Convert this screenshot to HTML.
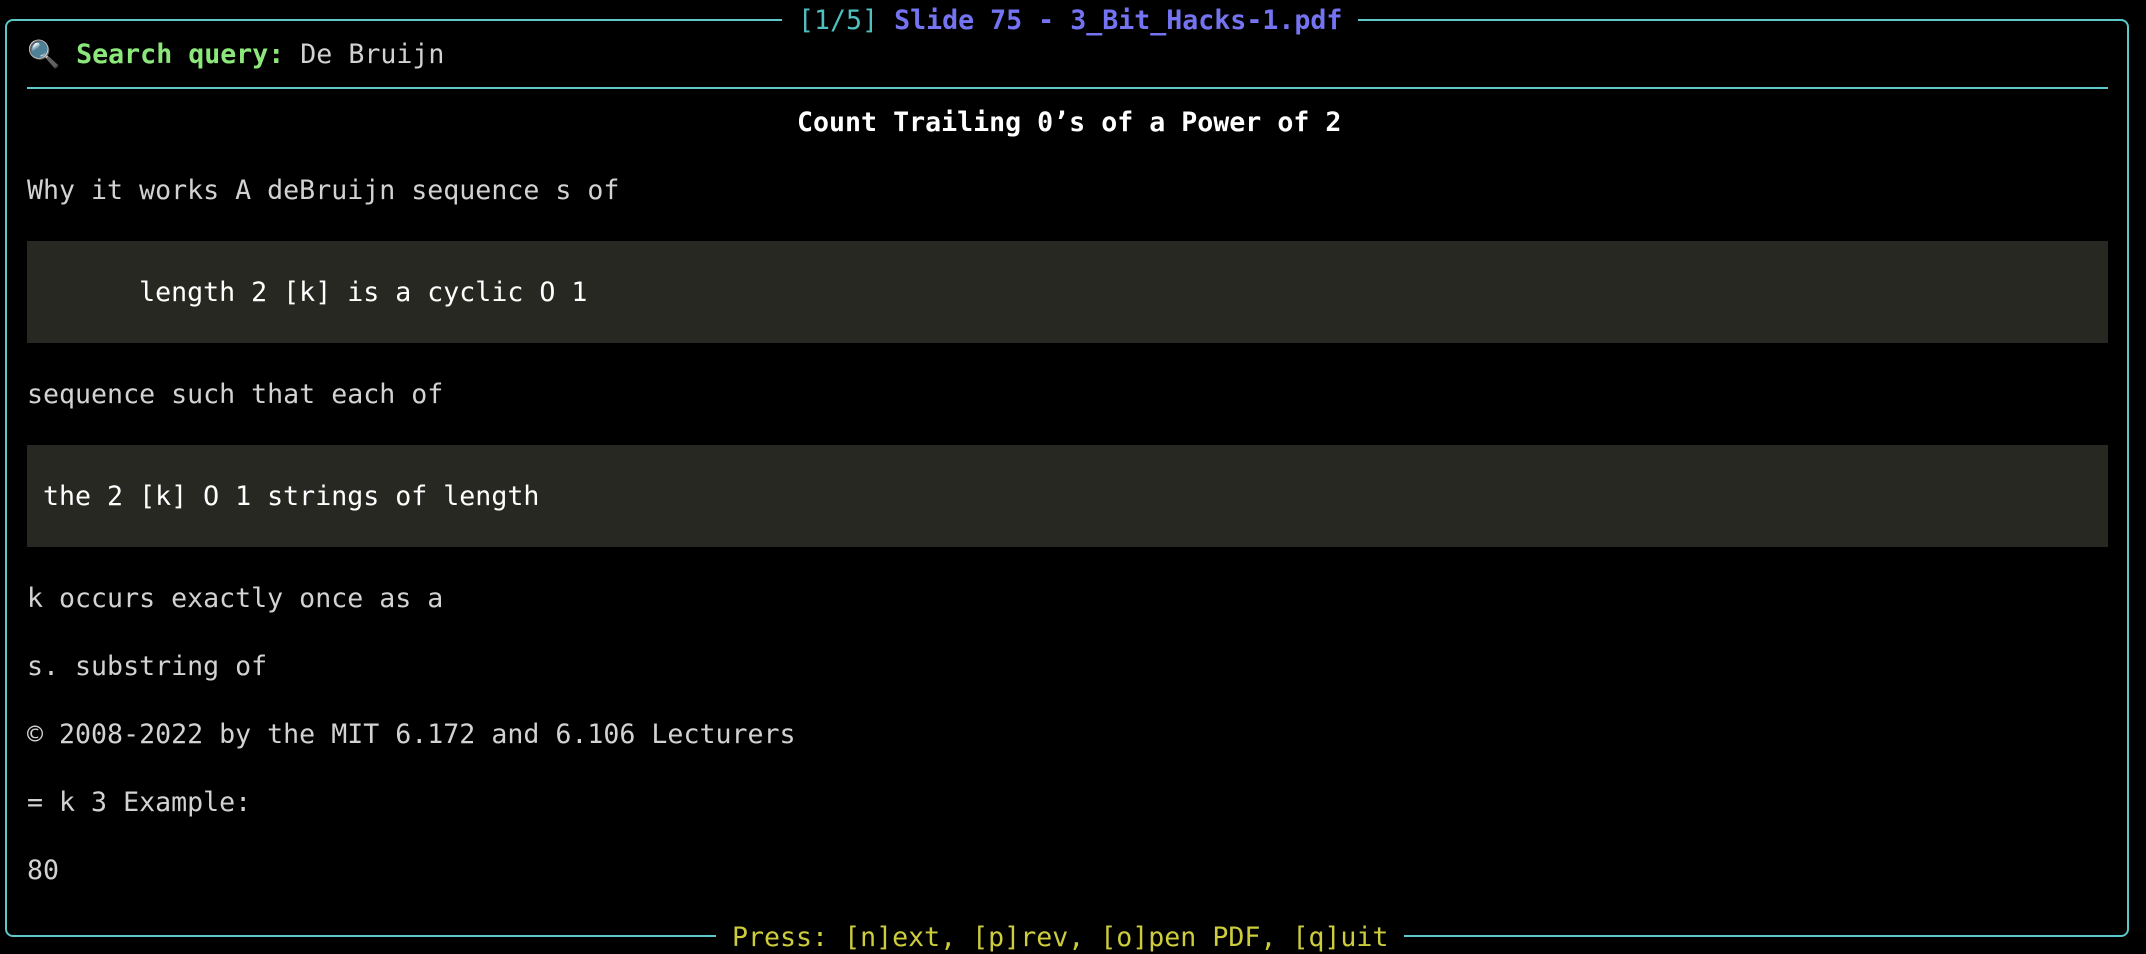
<!DOCTYPE html>
<html><head><meta charset="utf-8"><style>
html,body{margin:0;padding:0;background:#000;width:2146px;height:954px;overflow:hidden}
body{position:relative;font-family:"DejaVu Sans Mono","Liberation Mono",monospace;font-size:26.6px;color:#d2d2d2}
.box{position:absolute;left:5px;top:19px;width:2124px;height:918px;border:2px solid #5cc8c8;border-radius:8px;box-sizing:border-box}
.t{position:absolute;white-space:pre;line-height:34px;height:34px;margin-top:1px}
.blk{position:absolute;left:27px;width:2081px;height:102px;background:#282823}
.sep{position:absolute;left:27px;width:2081px;top:87px;height:2px;background:#5cc8c8}
</style></head><body>
<div class="box"></div>
<div class="t" style="left:782px;top:3px;background:#000;padding:0 16px"><span style="color:#4fbfbf">[1/5]</span> <span style="color:#7474f2;font-weight:bold">Slide 75 - 3_Bit_Hacks-1.pdf</span></div>
<div class="t" style="left:27px;top:37px"><span style="font-family:'DejaVu Sans',sans-serif">🔍</span> <span style="color:#8de87c;font-weight:bold">Search query:</span> De Bruijn</div>
<div class="sep"></div>
<div class="t" style="left:797px;top:105px;color:#fff;font-weight:bold">Count Trailing 0’s of a Power of 2</div>
<div class="t" style="left:27px;top:173px">Why it works A deBruijn sequence s of</div>
<div class="blk" style="top:241px"></div>
<div class="t" style="left:27px;top:275px;color:#fff">       length 2 [k] is a cyclic O 1</div>
<div class="t" style="left:27px;top:377px">sequence such that each of</div>
<div class="blk" style="top:445px"></div>
<div class="t" style="left:27px;top:479px;color:#fff"> the 2 [k] O 1 strings of length</div>
<div class="t" style="left:27px;top:581px">k occurs exactly once as a</div>
<div class="t" style="left:27px;top:649px">s. substring of</div>
<div class="t" style="left:27px;top:717px">© 2008-2022 by the MIT 6.172 and 6.106 Lecturers</div>
<div class="t" style="left:27px;top:785px">= k 3 Example:</div>
<div class="t" style="left:27px;top:853px">80</div>
<div class="t" style="left:716px;top:920px;background:#000;padding:0 16px;color:#cccc3c">Press: [n]ext, [p]rev, [o]pen PDF, [q]uit</div>
</body></html>
